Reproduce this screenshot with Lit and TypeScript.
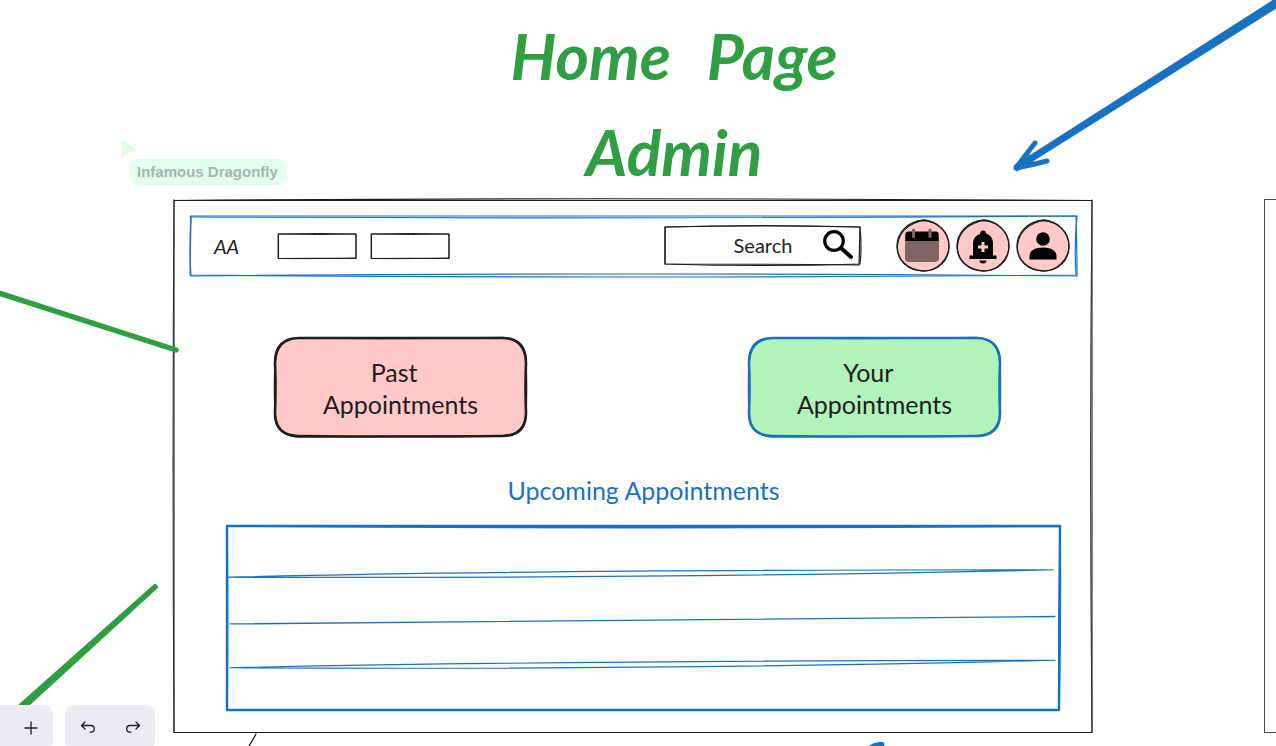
import { LitElement, html, css, svg } from "lit";
import { customElement, property } from "lit/decorators.js";

type Stroke = { d: string; width: number; fill?: string };
type Outline = { w: number; h: number; strokes: Stroke[] };

// Hand-sketched outlines. Each is drawn in its own box and stretches with it.
const OUTLINES: Record<string, Outline> = {
  frame: {
    w: 918, h: 533,
    strokes: [
      { d: "M0 0.500 Q400 -3 918 0.500 M0 0.500 Q460 1 918 0.500 V533.500 H0 V0", width: 1.1 },
      { d: "M0 0 Q-2 260 0 533 M918 0 Q915 260 918 533", width: 0.9 },
    ],
  },
  nav: {
    w: 887, h: 60,
    strokes: [
      { d: "M1 0 H886 Q887 30 887 60 Q440 56 1 60 Q-1 30 1 0", width: 1.2 },
      { d: "M0 1 Q440 3 887 0 Q884 30 886 59 Q440 63 0 59 L1 0", width: 1.2 },
    ],
  },
  tab: {
    w: 78, h: 25,
    strokes: [
      { d: "M0.500 0 Q40 -1 78 0 V24.500 Q40 24 0.500 24.500 Z", width: 1.1 },
      { d: "M0.500 0 Q40 1 78 0 L78 24 Q30 25 0.500 24.500 Z", width: 1 },
    ],
  },
  search: {
    w: 196, h: 39,
    strokes: [
      { d: "M0 0 Q98 -2 195 0 L194 38 Q98 37 0 37 Z", width: 1.2 },
      { d: "M0 0 Q98 -3 195 0 Q197 19 195 37 Q98 40 0 37 Z", width: 1.2 },
    ],
  },
  card: {
    w: 253, h: 100,
    strokes: [
      {
        d: "M25 0 Q126 0 228 0 Q252 0 252 25 Q251 50 252 75 Q252 98 228 98 Q126 99 25 98 Q1 98 1 75 Q2 50 1 25 Q1 0 25 0 Z",
        width: 2.6, fill: "card",
      },
      {
        d: "M25 0 Q126 1 229 -0.500 Q251 1 252 26 Q253 50 252 76 Q250 98 227 98 Q126 98 24 99 Q1 97 1 73 Q0 50 1 26 Q2 1 25 0 Z",
        width: 1.6,
      },
    ],
  },
  list: {
    w: 833, h: 185,
    strokes: [
      { d: "M0 0 Q416 0 833 0 Q832 92 832 185 H0 Z", width: 2.4 },
      { d: "M0 0 Q416 3 833 0 Q834 92 832 185 H0 Q1 92 0 0", width: 1.8 },
      { d: "M2 51.500 Q300 44 826 44 M2 51.500 Q440 53 826 44", width: 1.2 },
      { d: "M3 98.500 Q420 96 828 91", width: 1.3 },
      { d: "M3 142.500 Q360 135 828 135 M3 142.500 Q440 145 828 135", width: 1.2 },
    ],
  },
  circle: {
    w: 52, h: 52,
    strokes: [
      { d: "M26 0 C41 1 52 12 52 26 C52 41 41 51 26 51 C12 51 0 41 0 26 C0 13 10 2 26 0 Z", width: 1.3, fill: "circle" },
      { d: "M20 1 C38 -1 52 10 52 27 C51 41 39 51 27 51 C11 50 -1 40 0.500 25 C2 12 12 3 29 0", width: 1.2 },
    ],
  },
};

@customElement("sketch-outline")
class SketchOutline extends LitElement {
  @property() kind = "frame";

  static styles = css`
    :host { position: absolute; inset: 0; pointer-events: none; }
    .art { display: block; width: 100%; height: 100%; overflow: visible; }
    .stroke { fill: none; stroke: currentColor; vector-effect: non-scaling-stroke; stroke-linejoin: round; stroke-linecap: round; }
    .filled { fill: var(--sketch-fill, none); }
  `;

  render() {
    const o = OUTLINES[this.kind];
    return html`<svg class="art" viewBox="0 0 ${o.w} ${o.h}" preserveAspectRatio="none" aria-hidden="true">
      ${o.strokes.map((s) => svg`<path class="stroke ${s.fill ? "filled" : ""}" d=${s.d} stroke-width=${s.width} />`)}
    </svg>`;
  }
}

const calendarIcon = svg`
  <rect x="8" y="12" width="34" height="30" rx="4" fill="#806464" />
  <path d="M8.500 21V14a2.500 2.500 0 0 1 2.500-2.500H39a2.500 2.500 0 0 1 2.500 2.500V21Z" fill="#000" />
  <path d="M16.500 10V16.500M33 10V16.500" stroke="#806464" stroke-width="3.200" stroke-linecap="round" />`;

const bellIcon = svg`
  <path d="M26 10.500c1.800 0 3 1.200 3 3 4.500 1.300 7 5 7 10V35.500h3.500V39H12.500v-3.500H16V24c0-5 2.500-8.700 7-10 0-1.800 1.200-3.500 3-3.500Z" fill="#000" />
  <path d="M22.500 40.500h7a3.500 3 0 0 1-7 0Z" fill="#000" />
  <path d="M26 22v10M21 27h10" stroke="#ffc9c9" stroke-width="3" />`;

const personIcon = svg`
  <circle cx="26" cy="19" r="6.800" fill="#000" />
  <path d="M12.500 39.500V36c0-5 5-8.500 13.500-8.500S39.500 31 39.500 36v3.500Z" fill="#000" />`;

@customElement("app-root")
class AppRoot extends LitElement {
  static styles = css`
    :host { display: block; }
    * { box-sizing: border-box; }
    button { font: inherit; color: inherit; background: none; border: 0; padding: 0; margin: 0; cursor: pointer; }
    .canvas {
      position: relative; height: 100vh; overflow: hidden; background: #fff; color: #1e1e1e;
      padding: 200px 184px 0 174px; font-family: Lato, "Noto Sans", sans-serif;
    }
    .title {
      position: absolute; left: 40%; top: 8px; margin: 0; color: #2f9e44;
      font-size: 64px; line-height: 96px; font-weight: 700; font-style: italic;
    }
    .title-line { display: flex; justify-content: center; gap: 36px; }
    .ink { position: absolute; overflow: visible; pointer-events: none; fill: none; stroke-linecap: round; stroke-linejoin: round; }
    .ink-left { left: 0; top: 0; }
    .ink-right { right: 0; top: 0; }
    .neighbour { position: absolute; right: 0; top: 199px; width: 12px; height: 534px; border: 1px solid #4b4b4b; border-right: 0; }

    .pointer { position: absolute; left: 122px; top: 139px; }
    .pointer-art { display: block; fill: #e0fdec; }
    .pointer-name {
      display: block; margin-left: 7px; background: #e3ffee; border-radius: 9px; padding: 0 9px 0 8px;
      font: 700 15px/26px "Liberation Sans", sans-serif; color: #a2b7ab;
    }

    .frame { position: relative; padding: 16px 15px 22px 16px; }
    .nav { position: relative; display: flex; align-items: center; height: 60px; padding: 0 8px 0 24px; }
    .nav > sketch-outline, .agenda > sketch-outline { color: #1971c2; }
    .brand { font-size: 20px; line-height: 24px; font-style: italic; color: inherit; text-decoration: none; width: 64px; }
    .tab { position: relative; width: 78px; height: 25px; margin-right: 15px; }
    .search { position: relative; width: 196px; height: 39px; margin-left: auto; margin-right: 36px; }
    .search-box {
      display: block; width: 100%; height: 36px; padding: 0; border: 0; background: none; outline: none; text-align: center;
      font: 20px/24px Lato, "Noto Sans", sans-serif; color: #1e1e1e;
    }
    .search-box::placeholder { color: #1e1e1e; opacity: 1; }
    .search-go { position: absolute; right: 6px; top: 2px; width: 32px; height: 32px; }
    .actions { display: flex; gap: 8px; }
    .action { position: relative; width: 52px; height: 52px; --sketch-fill: #ffc9c9; }
    .glyph { position: relative; display: block; }

    .cards { display: flex; justify-content: space-between; padding: 62px 76px 0 84px; }
    .card { position: relative; width: 253px; height: 100px; font-size: 25px; line-height: 32px; }
    .card-text { position: relative; white-space: pre; }
    .past { --sketch-fill: #ffc9c9; }
    .yours { --sketch-fill: #b2f2bb; }
    .yours > sketch-outline { color: #1971c2; }
    .heading { margin: 36px 0 20px; padding-left: 20px; text-align: center; color: #1971c2; font-size: 25px; line-height: 32px; font-weight: 400; }
    .agenda { position: relative; margin: 0 17px 0 37px; }
    .rows { list-style: none; margin: 0; padding: 0; }
    .row { height: 46px; }

    .footer { position: absolute; left: -37px; bottom: -4px; display: flex; gap: 12px; }
    .tools { display: flex; background: #ececf4; border-radius: 9px; overflow: hidden; }
    .tool { width: 45px; height: 45px; display: grid; place-items: center; }
    .tool-art { fill: none; stroke: #1b1b1f; stroke-width: 1.3; stroke-linecap: round; stroke-linejoin: round; }
  `;

  private card(kind: string, text: string) {
    return html`<button class="card ${kind}">
      <sketch-outline kind="card"></sketch-outline>
      <div class="card-text">${text}</div>
    </button>`;
  }

  private action(label: string, art: unknown) {
    return html`<button class="action" aria-label=${label}>
      <sketch-outline kind="circle"></sketch-outline>
      <svg class="glyph" width="52" height="52" viewBox="0 0 52 52" fill="none">${art}</svg>
    </button>`;
  }

  private tool(label: string, d: string) {
    return html`<button class="tool" aria-label=${label}>
      <svg class="tool-art" width="20" height="20" viewBox="0 0 20 20"><path d=${d} /></svg>
    </button>`;
  }

  render() {
    return html`<main class="canvas">
      <h1 class="title">
        <span class="title-line"><span>Home</span> <span>Page</span></span>
        <span class="title-line">Admin</span>
      </h1>

      <section class="frame">
        <sketch-outline kind="frame"></sketch-outline>
        <nav class="nav">
          <sketch-outline kind="nav"></sketch-outline>
          <a class="brand" href="#home">AA</a>
          <button class="tab" aria-label="First tab"><sketch-outline kind="tab"></sketch-outline></button>
          <button class="tab" aria-label="Second tab"><sketch-outline kind="tab"></sketch-outline></button>
          <div class="search" role="search">
            <sketch-outline kind="search"></sketch-outline>
            <input class="search-box" type="text" placeholder="Search" aria-label="Search" />
            <button class="search-go" aria-label="Run search">
              <svg width="32" height="32" viewBox="0 0 32 32" fill="none" stroke="#000">
                <circle cx="11" cy="12" r="9.300" stroke-width="3.200" />
                <path d="M18 19L28 28" stroke-width="4" stroke-linecap="round" />
              </svg>
            </button>
          </div>
          <div class="actions">
            ${this.action("Calendar", calendarIcon)}
            ${this.action("Alerts", bellIcon)}
            ${this.action("Profile", personIcon)}
          </div>
        </nav>

        <div class="cards">
          ${this.card("past", "Past  \nAppointments")}
          ${this.card("yours", "Your  \nAppointments")}
        </div>

        <h2 class="heading">Upcoming Appointments</h2>
        <div class="agenda">
          <sketch-outline kind="list"></sketch-outline>
          <ul class="rows" aria-label="Upcoming appointments">
            ${[1, 2, 3, 4].map(() => html`<li class="row"></li>`)}
          </ul>
        </div>
      </section>

      <div class="neighbour"></div>

      <svg class="ink ink-left" width="900" height="746" viewBox="0 0 900 746" aria-hidden="true">
        <path d="M-4 292L176 350" stroke="#2f9e44" stroke-width="5.500" />
        <path d="M155 585L20 705L27 706L157 587Z" stroke="#2f9e44" stroke-width="2.500" fill="#2f9e44" />
        <path d="M256 734L248 748" stroke="#1e1e1e" stroke-width="1.300" />
        <path d="M870 748Q876 744 882 744.500" stroke="#1971c2" stroke-width="5" />
      </svg>
      <svg class="ink ink-right" width="286" height="220" viewBox="0 0 286 220" aria-hidden="true">
        <path d="M25 166L288 -2V6L27 170Z" fill="#1971c2" stroke="#1971c2" stroke-width="2.400" />
        <path d="M45 143Q34 157 26 168Q42 165 57 161" stroke="#1971c2" stroke-width="5" />
        <path d="M26 168L40 154L44 163Z" fill="#1971c2" />
      </svg>

      <div class="pointer">
        <svg class="pointer-art" width="16" height="20" viewBox="0 0 16 20"><path d="M0 0L15 12L7 13L0 19Z" /></svg>
        <span class="pointer-name">Infamous Dragonfly</span>
      </div>

      <footer class="footer">
        <div class="tools">
          ${this.tool("Zoom out", "M4 10H16")}
          ${this.tool("Zoom in", "M4 10H16M10 4V16")}
        </div>
        <div class="tools">
          ${this.tool("Undo", "M7 11L3.500 7.500L7 4M3.500 7.500H13a3.300 3.300 0 0 1 0 6.600H12")}
          ${this.tool("Redo", "M13 11L16.500 7.500L13 4M16.500 7.500H7a3.300 3.300 0 0 0 0 6.600H8")}
        </div>
      </footer>
    </main>`;
  }
}
